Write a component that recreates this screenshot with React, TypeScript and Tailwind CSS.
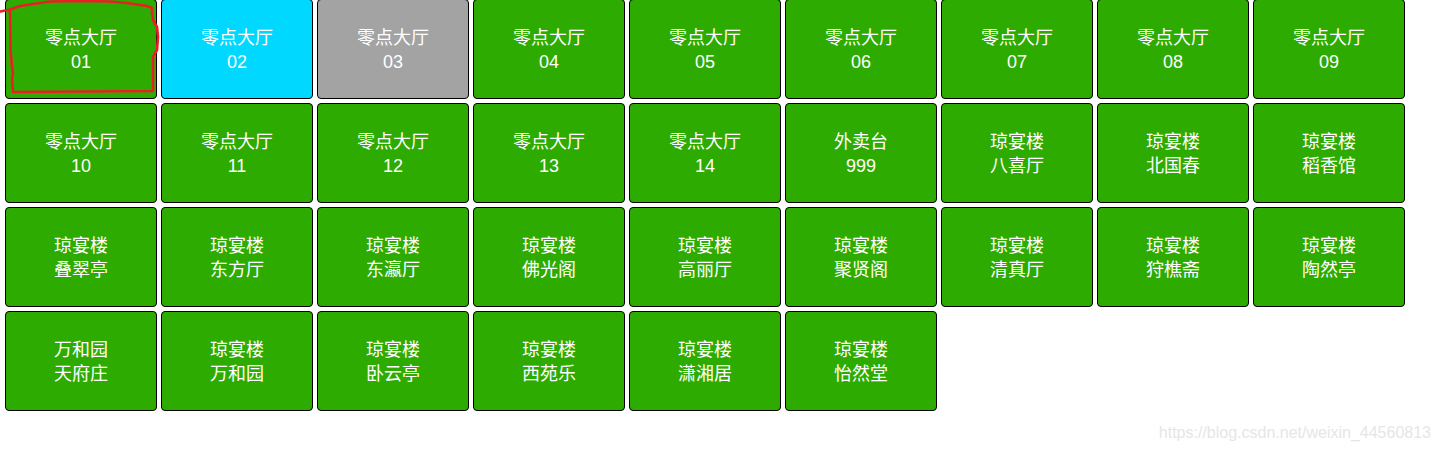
const cells: { top: string; bottom: string; color?: 'cyan' | 'gray' }[] = [
  { top: '零点大厅', bottom: '01' },
  { top: '零点大厅', bottom: '02', color: 'cyan' },
  { top: '零点大厅', bottom: '03', color: 'gray' },
  { top: '零点大厅', bottom: '04' },
  { top: '零点大厅', bottom: '05' },
  { top: '零点大厅', bottom: '06' },
  { top: '零点大厅', bottom: '07' },
  { top: '零点大厅', bottom: '08' },
  { top: '零点大厅', bottom: '09' },
  { top: '零点大厅', bottom: '10' },
  { top: '零点大厅', bottom: '11' },
  { top: '零点大厅', bottom: '12' },
  { top: '零点大厅', bottom: '13' },
  { top: '零点大厅', bottom: '14' },
  { top: '外卖台', bottom: '999' },
  { top: '琼宴楼', bottom: '八喜厅' },
  { top: '琼宴楼', bottom: '北国春' },
  { top: '琼宴楼', bottom: '稻香馆' },
  { top: '琼宴楼', bottom: '叠翠亭' },
  { top: '琼宴楼', bottom: '东方厅' },
  { top: '琼宴楼', bottom: '东瀛厅' },
  { top: '琼宴楼', bottom: '佛光阁' },
  { top: '琼宴楼', bottom: '高丽厅' },
  { top: '琼宴楼', bottom: '聚贤阁' },
  { top: '琼宴楼', bottom: '清真厅' },
  { top: '琼宴楼', bottom: '狩樵斋' },
  { top: '琼宴楼', bottom: '陶然亭' },
  { top: '万和园', bottom: '天府庄' },
  { top: '琼宴楼', bottom: '万和园' },
  { top: '琼宴楼', bottom: '卧云亭' },
  { top: '琼宴楼', bottom: '西苑乐' },
  { top: '琼宴楼', bottom: '潇湘居' },
  { top: '琼宴楼', bottom: '怡然堂' },
]

function Table({ top, bottom, color }: { top: string; bottom: string; color?: 'cyan' | 'gray' }) {
  const bg = color === 'cyan' ? 'bg-[#00d8ff]' : color === 'gray' ? 'bg-[#a3a3a3]' : 'bg-[#2eab00]'
  return (
    <div className={`h-[100px] w-[152px] pt-[2px] border border-black rounded-[4px] ${bg} flex flex-col items-center justify-center text-white text-[18px] leading-6`}>
      <div>{top}</div>
      <div>{bottom}</div>
    </div>
  )
}

export default function App() {
  return (
    <div
      className="relative h-[450px] w-[1441px] overflow-hidden bg-white"
      style={{ fontFamily: '"Liberation Sans", "Noto Sans CJK SC", sans-serif' }}
    >
      <div className="-mt-px pl-[5px] grid grid-cols-[repeat(9,152px)] gap-1">
        {cells.map((c, i) => (
          <Table key={i} {...c} />
        ))}
      </div>

      {/* hand-drawn red mark around the first table */}
      <svg className="absolute left-0 top-0 pointer-events-none" width="170" height="100" viewBox="0 0 170 100">
        <path
          d="M0 11.5 L10 9.5 L20 6 L33 4 L50 1.5 L83 1 L110 1.5 L127 3 L147 6 L152 8 L152 13 L153 20 L157 27 L158 37 L157 50 L153 57 L153 91 L13 92 L12 80 L13 73 L12 67 L10.5 50 L10 10"
          fill="none"
          stroke="#ea1f25"
          strokeWidth="2.6"
          strokeLinejoin="round"
          strokeLinecap="round"
        />
      </svg>

      <div className="absolute right-[10px] top-[421px] text-[16px] text-[#e6e6e6]">
        https://blog.csdn.net/weixin_44560813
      </div>
    </div>
  )
}
